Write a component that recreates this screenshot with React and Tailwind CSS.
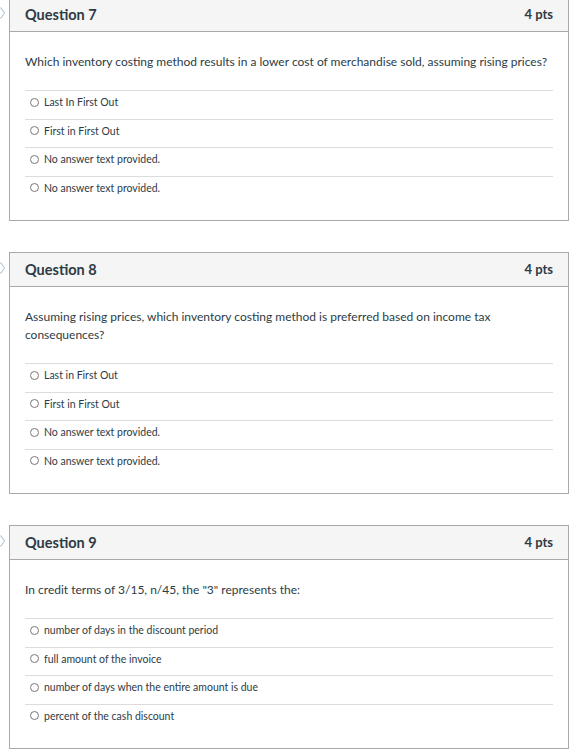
import React from "react";

const questions = [
  {
    number: 7,
    points: "4 pts",
    text: "Which inventory costing method results in a lower cost of merchandise sold, assuming rising prices?",
    answers: [
      "Last In First Out",
      "First in First Out",
      "No answer text provided.",
      "No answer text provided.",
    ],
  },
  {
    number: 8,
    points: "4 pts",
    text: "Assuming rising prices, which inventory costing method is preferred based on income tax consequences?",
    answers: [
      "Last in First Out",
      "First in First Out",
      "No answer text provided.",
      "No answer text provided.",
    ],
  },
  {
    number: 9,
    points: "4 pts",
    text: 'In credit terms of 3/15, n/45, the "3" represents the:',
    answers: [
      "number of days in the discount period",
      "full amount of the invoice",
      "number of days when the entire amount is due",
      "percent of the cash discount",
    ],
  },
];

// little flag marker peeking from the left edge
const FlagMarker = () => (
  <svg
    className="absolute -left-[16px] top-[8px]"
    width="12"
    height="14"
    viewBox="0 0 12 14"
    fill="none"
  >
    <path
      d="M1 2 H7 L10.5 7 L7 12 H1 Z"
      stroke="#b8c9dc"
      strokeWidth="1.2"
      strokeLinejoin="round"
    />
  </svg>
);

const QuestionCard = ({ q }) => (
  <div className="relative border border-[#a9a9a9] bg-white">
    <FlagMarker />
    <div className="h-[34px] flex items-center justify-between bg-[#f5f5f5] border-b border-[#a9a9a9] pl-[15px] pr-[15px]">
      <span className="text-[14.5px] font-bold text-[#2d3b45]">
        Question {q.number}
      </span>
      <span className="text-[13px] font-bold text-[#2d3b45]">{q.points}</span>
    </div>
    <div className="px-[15px] pt-[21px] pb-[16px]">
      <p className="text-[12px] leading-[18px] text-[#2d3b45]">{q.text}</p>
      <div className="mt-[19px]">
        {q.answers.map((a, i) => (
          <div
            key={i}
            className="h-[28.5px] border-t border-[#dcdcdc] flex items-start pt-[4px] pl-[5px]"
          >
            <span className="mt-[2.5px] w-[9px] h-[9px] rounded-full border border-[#777] shrink-0" />
            <span className="ml-[5px] text-[10.5px] leading-[14px] text-[#2d3b45]">
              {a}
            </span>
          </div>
        ))}
      </div>
    </div>
  </div>
);

const App = () => {
  return (
    <div
      className="min-h-screen bg-white overflow-hidden"
      style={{ fontFamily: "Lato, 'Open Sans', sans-serif" }}
    >
      <div className="ml-[9px] w-[560px] -mt-[3px] flex flex-col gap-[31px]">
        {questions.map((q) => (
          <QuestionCard key={q.number} q={q} />
        ))}
      </div>
    </div>
  );
};

export default App;
